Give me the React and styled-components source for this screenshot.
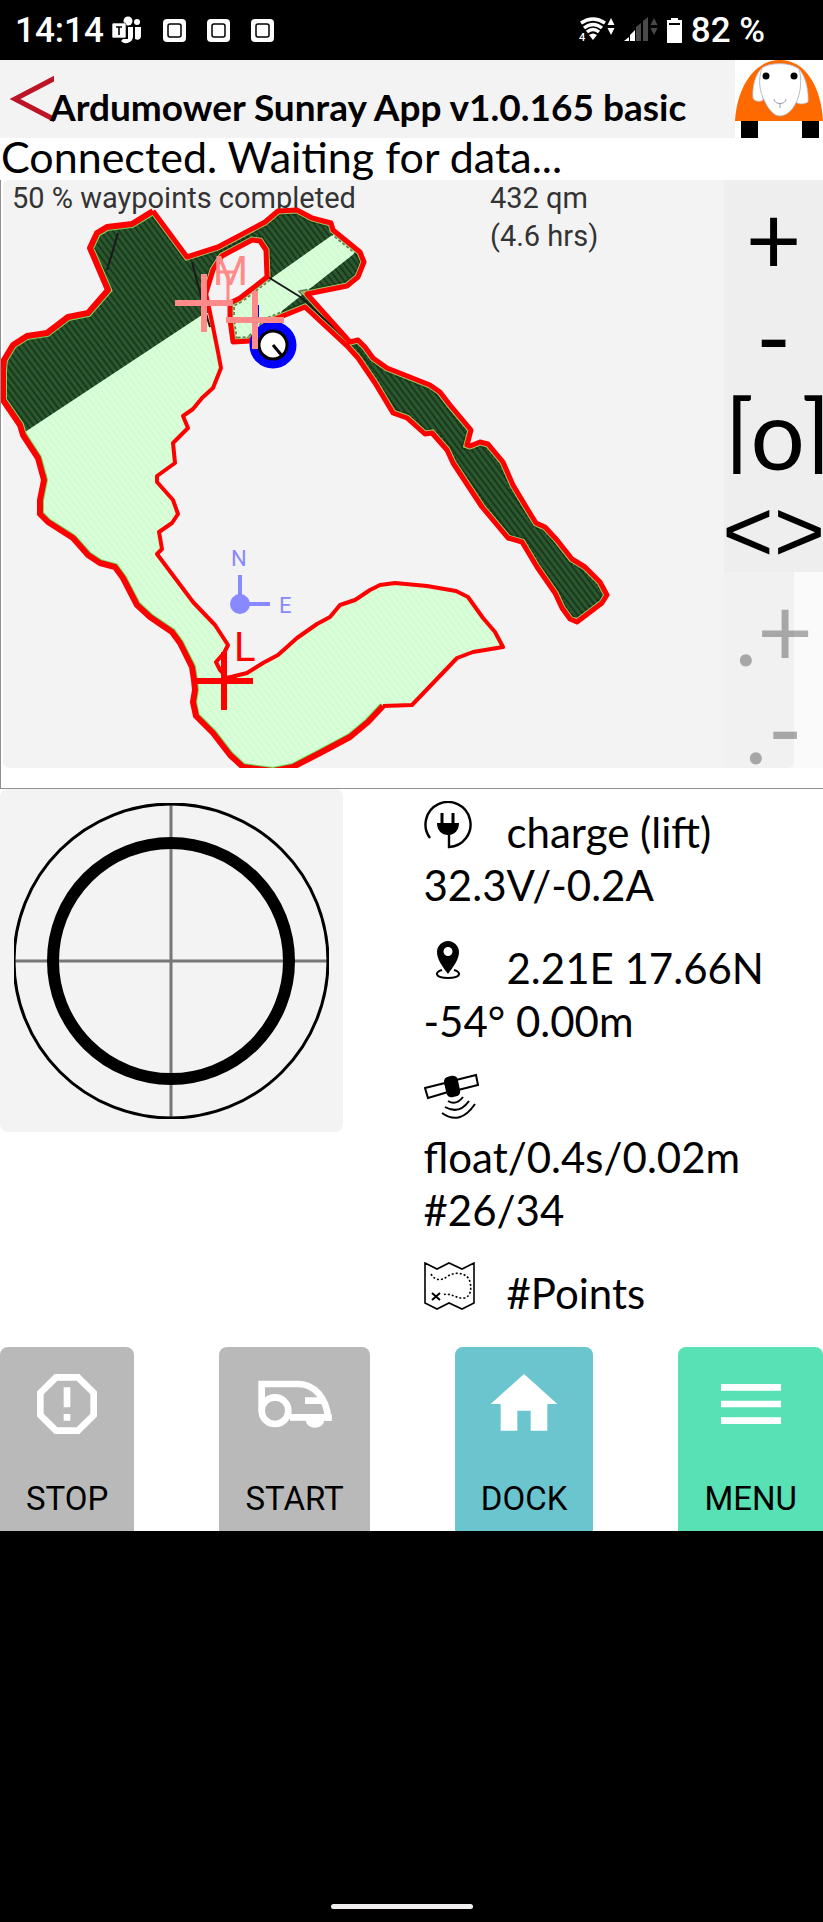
import React from "react";
import styled, { createGlobalStyle } from "styled-components";

const colors = {
  panel: "#f3f3f3",
  tools: "#eeeeee",
  fence: "#ff0000",
  grass: "#d9ffd9",
  mowed: "#2b582f",
  marker: "#ff8a8a",
  compass: "#8888ff",
};

const GlobalStyle = createGlobalStyle`
  * {
    box-sizing: border-box;
  }
  body {
    margin: 0;
    background: #000000;
    font-family: Lato, "Open Sans", sans-serif;
    color: #000000;
  }
  button {
    border: 0;
    padding: 0;
    cursor: pointer;
    color: inherit;
  }
  svg {
    display: block;
  }
`;

const Screen = styled.div`
  min-height: 100vh;
  display: flex;
  flex-direction: column;
`;

// phone status bar
const StatusBar = styled.div`
  height: 60px;
  padding: 0 58px 0 15px;
  display: flex;
  align-items: center;
  justify-content: space-between;
  background: #000000;
  color: #ffffff;
  font-family: Roboto, sans-serif;
  font-size: 35px;
  font-weight: 500;
`;
const StatusGroup = styled.div`
  display: flex;
  align-items: center;
  gap: ${(props) => props.$gap}px;
`;

// app header
const Header = styled.header`
  height: 78px;
  display: flex;
  align-items: stretch;
  background: ${colors.panel};
`;
const BackLink = styled.a`
  width: 50px;
  padding-left: 9px;
  flex-shrink: 0;
`;
const Title = styled.h1`
  flex: 1;
  margin: 0;
  padding-top: 23px;
  font-size: 37px;
  line-height: 48px;
  font-weight: 700;
  white-space: nowrap;
`;
const Message = styled.p`
  margin: 0;
  height: 42px;
  padding-left: 1px;
  font-size: 43px;
  line-height: 37px;
  background: #ffffff;
  white-space: nowrap;
`;

const Content = styled.main`
  background: #ffffff;
`;

// map
const MapSection = styled.section`
  position: relative;
  padding-bottom: 20px;
  border-left: 1px solid #909090;
  border-bottom: 1px solid #909090;
`;
const ToolColumn = styled.div`
  position: absolute;
  top: 0;
  right: 0;
  width: 12%;
`;
const ToolGroup = styled.div`
  height: ${(props) => props.$rows * 98}px;
  padding-top: 8px;
  display: flex;
  flex-direction: column;
  background: ${(props) => (props.$dimmed ? "rgba(238, 238, 238, 0.3)" : colors.tools)};
`;
const ToolButton = styled.button`
  height: 98px;
  flex-shrink: 0;
  background: transparent;
  opacity: ${(props) => (props.$dimmed ? 0.3 : 1)};
  font-family: Lato, sans-serif;
  font-size: 96px;
  line-height: 98px;
  text-align: center;
  white-space: nowrap;
`;
const CenterButton = styled(ToolButton)`
  height: 90px;
  margin-bottom: 8px;
  overflow: hidden;
  text-align: left;
`;
const RotateButton = styled(ToolButton)`
  display: flex;
  justify-content: center;
  font-family: "Liberation Sans", sans-serif;
  font-size: 88px;
`;

// state
const StateSection = styled.section`
  display: grid;
  grid-template-columns: 1fr 1fr;
  padding-bottom: 27px;
`;
const GaugePanel = styled.div`
  width: 343px;
  height: 343px;
  border-radius: 8px;
  background: ${colors.panel};
`;
const InfoList = styled.div`
  display: flex;
  flex-direction: column;
  gap: 30px;
  padding: 17px 0 0 12px;
  font-size: 42px;
  line-height: 53px;
  white-space: nowrap;
`;
const InfoFirst = styled.div`
  display: flex;
  height: 53px;
`;
const IconSlot = styled.span`
  width: 83px;
  flex-shrink: 0;

  svg {
    margin-top: -5px;
  }
`;

// bottom buttons
const ActionBar = styled.nav`
  display: flex;
  justify-content: space-between;
`;
const ActionButton = styled.button`
  height: 184px;
  padding: 17px 26px 0;
  display: flex;
  flex-direction: column;
  align-items: center;
  gap: 35px;
  border-radius: 8px 8px 0 0;
  background: ${(props) => props.$color};
  font-family: Roboto, sans-serif;
  font-size: 33px;
  line-height: 40px;
`;

const NavArea = styled.footer`
  flex: 1;
  display: flex;
  align-items: flex-end;
  justify-content: center;
  padding: 0 20px 13px 0;
`;
const NavHandle = styled.div`
  width: 142px;
  height: 5px;
  border-radius: 3px;
  background: #f0eeee;
`;

const WEST =
  "153,211 132,224 107,227 97,233 90,248 108,290 88,313 68,317 47,333 27,336 13,345 4,360 3,370 3,400 20,425 23,435 38,458 44,480 40,500 40,514 48,522 73,538 88,555 100,563 115,567 123,578 137,605 150,617 172,632 180,643 192,667 194,680 195,690 193,702 196,716 213,733 230,755 243,767 273,771 293,767 320,753 350,737 368,722 383,706";
const SOUTH =
  "383,706 412,705 457,658 473,652 503,647 495,632 483,618 468,597 456,591 427,586 395,583 380,585 370,590 355,600 340,605 330,617 317,624 297,638 278,655 263,663 247,673 227,678 220,670 216,662 224,653 228,645 215,625 193,602 157,554 162,549 159,532 172,523 178,514 173,500 157,482 157,476 175,463 173,443 188,428 183,416 193,409 202,398 213,388 221,368 218,352 213,327 206,293";
const EAST =
  "206,293 213,270 222,256 252,240 260,241 266,250 267,277 240,298 230,303 230,320 233,342 250,341 268,322 305,307 348,347 358,358 375,383 393,413 407,418 425,434 432,433 447,450 453,463 482,507 508,538 522,542 537,567 555,593 562,608 570,619 577,622 602,603 607,595 600,582 585,567 572,559 557,540 545,527 536,523 528,510 513,485 503,462 488,444 480,442 470,446 467,445 471,430 450,405 440,392 430,385 387,368 373,358 365,347 358,340 350,342 307,294 347,286 358,277 364,262 360,252 333,230 331,223 312,218 297,210 278,211 265,222 218,247 187,257 153,211";
const FIELD = `${WEST} ${SOUTH} ${EAST}`;

const Cross = ({ x, y, color }) => (
  <path
    d={`M${x - 29} ${y}h58M${x} ${y - 29}v58`}
    stroke={color}
    strokeWidth="6"
  />
);

const MowerMap = () => (
  <svg viewBox="1 180 822 588" width="100%" fontFamily="Roboto, sans-serif">
    <defs>
      <pattern id="dark" width="5" height="5" patternUnits="userSpaceOnUse" patternTransform="rotate(-37)">
        <rect width="5" height="5" fill={colors.mowed} />
        <path d="M1 0v5" stroke="#0c260f" strokeWidth="1.2" />
      </pattern>
      <pattern id="light" width="5" height="5" patternUnits="userSpaceOnUse" patternTransform="rotate(-37)">
        <rect width="5" height="5" fill={colors.grass} />
        <path d="M1 0v5" stroke="#cdf8cb" strokeWidth="1" />
      </pattern>
      <clipPath id="field">
        <polygon points={FIELD} />
      </clipPath>
    </defs>
    <rect x="3" y="180" width="791" height="588" rx="6" fill={colors.panel} />
    <g fontSize="29" fill="#333333">
      <text x="12" y="208">50 % waypoints completed</text>
      <text x="490" y="208">432 qm</text>
      <text x="490" y="246">(4.6 hrs)</text>
    </g>
    <g clipPath="url(#field)">
      <rect x="0" y="180" width="640" height="600" fill="url(#dark)" />
      <polygon
        points="0,449 28,430 205,313 228,313 225,400 260,560 500,570 530,640 530,780 0,780"
        fill="url(#light)"
      />
      <polygon
        points="338,231 360,249 283,310 268,330 230,345 228,305 273,277"
        fill="url(#light)"
      />
      <polyline points={EAST} fill="none" stroke="#0c2a10" strokeWidth="10" strokeDasharray="3 2" opacity="0.6" />
      <polyline points={EAST} fill="none" stroke="#a8c060" strokeWidth="7" />
      <polyline points={WEST} fill="none" stroke="#6fe060" strokeWidth="8" />
      <path
        d="M118 233L107 270M192 262L202 300L210 327M268 277L302 298M268 277L232 300M302 298L350 343"
        stroke="#1a1a1a"
        strokeWidth="2"
        fill="none"
      />
    </g>
    <g fill="none" stroke={colors.fence} strokeLinejoin="round">
      <polyline points={WEST} strokeWidth="6" />
      <polyline points={SOUTH} strokeWidth="4" />
      <polyline points={EAST} strokeWidth="5" />
    </g>
    <g fill="none" stroke={colors.compass} strokeWidth="4">
      <path d="M240 575v29h30" />
      <circle cx="240" cy="604" r="8" fill={colors.compass} />
    </g>
    <g fontSize="22" fill={colors.compass}>
      <text x="231" y="566">N</text>
      <text x="279" y="613">E</text>
    </g>
    <Cross x={224} y={681} color={colors.fence} />
    <text x="234" y="661" fontSize="40" fill={colors.fence}>L</text>
    <path d="M257 305v16" stroke="#0000ff" strokeWidth="4" />
    <circle cx="273" cy="345" r="19" fill="none" stroke="#0000ff" strokeWidth="9" />
    <circle cx="273" cy="345" r="14" fill="#ffffff" stroke="#000000" strokeWidth="3" />
    <path d="M273 345l10 12" stroke="#000000" strokeWidth="3" />
    <Cross x={204} y={303} color={colors.marker} />
    <Cross x={255} y={320} color={colors.marker} />
    <path d="M219 272h17M228 272v29" stroke={colors.marker} strokeWidth="3" />
    <text x="213" y="285" fontSize="40" fill={colors.marker}>M</text>
  </svg>
);

const Gauge = () => (
  <svg viewBox="0 0 343 343" width="343" height="343" fill="none">
    <path d="M14 172h315M171 14v315" stroke="#777777" strokeWidth="3" />
    <svg x="14" y="14" width="315" height="316" viewBox="14 14 315 316">
      <circle cx="171" cy="172" r="157" stroke="#000000" strokeWidth="3" />
    </svg>
    <circle cx="171" cy="172" r="118" stroke="#000000" strokeWidth="12" />
  </svg>
);

const Sheep = () => (
  <svg viewBox="0 0 88 78" width="88" height="78">
    <rect width="88" height="78" fill="#ffffff" />
    <path d="M0 61C2 26 20 0 45 0s41 26 43 61z" fill="#ff6a00" />
    <path d="M6 61h17v17H6zM67 61h17v17H67z" fill="#000000" />
    <path d="M27 8C20 14 17 28 18 38c1 4 8 4 10 2zM63 8c7 6 11 22 10 34-3 2-9 3-12 0z" fill="#ffffff" stroke="#bbbbcc" strokeWidth="0.8" />
    <path d="M27 8C35 2 55 2 64 9c3 10 2 24-3 34-4 8-10 13-16 13s-11-6-15-14C24 31 23 19 27 8z" fill="#ffffff" stroke="#aaaabb" strokeWidth="0.8" />
    <circle cx="31" cy="16" r="3.5" />
    <circle cx="59" cy="16" r="3.5" />
    <path d="M39 39c0 6 12 6 12 0M45 44v4" fill="none" stroke="#9999aa" />
  </svg>
);

const TeamsIcon = () => (
  <svg viewBox="0 0 30 28" width="30" height="28" fill="#ffffff">
    <circle cx="16" cy="5" r="4.5" />
    <circle cx="25" cy="6" r="3" />
    <path d="M10 11h11v9a7 7 0 0 1-12 5l2-2h5V11z" />
    <path d="M23 11h6v9c0 3-3 5-6 3z" />
    <rect x="0" y="7" width="14" height="15" rx="1.5" stroke="#000000" strokeWidth="0.6" />
    <path d="M4 11h6M7 11v8" stroke="#000000" strokeWidth="1.6" />
  </svg>
);

const SquareIcon = () => (
  <svg viewBox="0 0 23 23" width="23" height="23">
    <rect width="23" height="23" rx="4" fill="#ffffff" />
    <rect x="5" y="5" width="13" height="13" rx="2" fill="#ffffff" stroke="#000000" strokeWidth="1.5" />
  </svg>
);

const WifiIcon = () => (
  <svg viewBox="0 0 36 26" width="36" height="26">
    <g fill="none" stroke="#ffffff" strokeWidth="3.4">
      <path d="M2 6q12-8 24 0" />
      <path d="M5 11q9-7 18 0" />
      <path d="M8 15q6-5 12 0" />
    </g>
    <path d="M10 18q4-3 8 0l-4 5z" fill="#ffffff" />
    <text x="0" y="24" fontSize="11" fontWeight="500" fill="#ffffff">4</text>
    <path d="M32 1l3.5 7h-7zM32 18l3.5-7h-7z" fill="#ffffff" />
  </svg>
);

const SignalIcon = () => (
  <svg viewBox="0 0 34 26" width="34" height="26">
    <path d="M12 10l5-4v18h-5zM19 4l5-4v24h-5z" fill="#4a4a4a" />
    <path d="M0 24l5-4v4zM6 18l5-5v11H6z" fill="#ffffff" />
    <path d="M30 1l3.5 7h-7zM30 18l3.5-7h-7z" fill="#4a4a4a" />
  </svg>
);

const BatteryIcon = () => (
  <svg viewBox="0 0 15 25" width="15" height="25">
    <path d="M4 0h7v2h4v23H0V2h4z" fill="#ffffff" />
    <path d="M2 6h11" stroke="#000000" strokeWidth="2" />
  </svg>
);

const PlugIcon = () => (
  <svg viewBox="0 0 58 53" width="58" height="53" fill="none" stroke="#000000" strokeWidth="2.4">
    <path d="M6 37A22.5 22.5 0 1 1 25 46V32" />
    <path d="M18 12v12M29 12v12" strokeWidth="3" />
    <path d="M13 22h22c0 8-5 12-11 12s-11-4-11-12z" fill="#000000" stroke="none" />
  </svg>
);

const PinIcon = () => (
  <svg viewBox="0 0 58 53" width="58" height="53">
    <path fillRule="evenodd" d="M24 4c-6 0-11 5-11 11 0 7 5 14 11 22 6-8 11-15 11-22 0-6-5-11-11-11zm0 6a4.5 4.5 0 1 1 0 9 4.5 4.5 0 0 1 0-9z" />
    <path d="M18 33c-8 2-7 8 6 8s14-6 6-8" fill="none" stroke="#000000" strokeWidth="2" />
  </svg>
);

const SatelliteIcon = () => (
  <svg viewBox="0 0 58 53" width="58" height="53" fill="none" stroke="#000000" strokeWidth="2">
    <path d="M1 15l20-5 3 9-20 6zM32 7l20-5 2 10-20 5z" />
    <rect x="22" y="4" width="12" height="19" rx="4" transform="rotate(-12 28 13)" fill="#000000" />
    <path d="M24 28q8 5 15-4M21 34q14 8 24-6M18 40q18 13 33-9" />
  </svg>
);

const MapIcon = () => (
  <svg viewBox="0 0 58 53" width="58" height="53" fill="none" stroke="#000000" strokeWidth="1.6">
    <path d="M1 1l12 6 12-6 13 6 12-6v40l-12 6-13-6-12 6-12-6z" />
    <path d="M7 12c4 7 11 7 17 2 8-5 20-3 22 6 2 8 0 15-6 16-8 1-13-6-22-3" strokeDasharray="2 2" />
    <path d="M8 31l8 7M16 31l-8 7" strokeWidth="2" />
  </svg>
);

const ActionIcon = ({ children }) => (
  <svg viewBox="0 0 24 24" width="80" height="80" fill="#ffffff">
    {children}
  </svg>
);

const StopIcon = () => (
  <ActionIcon>
    <path d="M15.73 3H8.27L3 8.27v7.46L8.27 21h7.46L21 15.73V8.27L15.73 3zM19 14.9L14.9 19H9.1L5 14.9V9.1L9.1 5h5.8L19 9.1v5.8z" />
    <path d="M11 7h2v6h-2zM11 15h2v2h-2z" />
  </ActionIcon>
);

const StartIcon = () => (
  <ActionIcon>
    <path d="M2 14V6h11c5 0 8.5 4.5 8.9 10H10.5M15 11h6" fill="none" stroke="#ffffff" strokeWidth="2" />
    <path d="M20.9 17H23v-2h-2z" />
    <circle cx="6" cy="14" r="4" fill="none" stroke="#ffffff" strokeWidth="2" />
    <path d="M15.2 16.8a2.8 2.3 0 0 0 5.6 0z" />
  </ActionIcon>
);

const HomeIcon = () => (
  <ActionIcon>
    <path d="M10 20v-6h4v6h5v-8h3L12 3 2 12h3v8z" />
  </ActionIcon>
);

const MenuIcon = () => (
  <ActionIcon>
    <path d="M3 18h18v-2H3v2zm0-5h18v-2H3v2zm0-7v2h18V6H3z" />
  </ActionIcon>
);

const actions = [
  { label: "STOP", color: "#b9b9b9", Icon: StopIcon },
  { label: "START", color: "#b9b9b9", Icon: StartIcon },
  { label: "DOCK", color: "#6ac5cf", Icon: HomeIcon },
  { label: "MENU", color: "#58e1b5", Icon: MenuIcon },
];

const App = () => {
  return (
    <Screen>
      <GlobalStyle />
      <StatusBar>
        <StatusGroup $gap={21}>
          <StatusGroup $gap={8}>
            <span>14:14</span>
            <TeamsIcon />
          </StatusGroup>
          <SquareIcon />
          <SquareIcon />
          <SquareIcon />
        </StatusGroup>
        <StatusGroup $gap={9}>
          <WifiIcon />
          <SignalIcon />
          <StatusGroup $gap={9}>
            <BatteryIcon />
            <span>82 %</span>
          </StatusGroup>
        </StatusGroup>
      </StatusBar>

      <Content>
        <Header>
          <BackLink href="#" aria-label="Back">
            <svg viewBox="0 0 45 78" width="45" height="78">
              <path d="M50 16L6 39L50 62" fill="none" stroke="#bb1526" strokeWidth="5" />
            </svg>
          </BackLink>
          <Title>Ardumower Sunray App v1.0.165 basic</Title>
          <Sheep />
        </Header>
        <Message>Connected. Waiting for data...</Message>

        <MapSection>
          <MowerMap />
          <ToolColumn>
            <ToolGroup $rows={4}>
              <ToolButton>+</ToolButton>
              <ToolButton>-</ToolButton>
              <CenterButton>[o]</CenterButton>
              <RotateButton>&lt;&gt;</RotateButton>
            </ToolGroup>
            <ToolGroup $rows={2} $dimmed>
              <ToolButton $dimmed>.+</ToolButton>
              <ToolButton $dimmed>.-</ToolButton>
            </ToolGroup>
          </ToolColumn>
        </MapSection>

        <StateSection>
          <GaugePanel>
            <Gauge />
          </GaugePanel>
          <InfoList>
            <div>
              <InfoFirst>
                <IconSlot><PlugIcon /></IconSlot>
                charge (lift)
              </InfoFirst>
              <div>32.3V/-0.2A</div>
            </div>
            <div>
              <InfoFirst>
                <IconSlot><PinIcon /></IconSlot>
                2.21E 17.66N
              </InfoFirst>
              <div>-54° 0.00m</div>
            </div>
            <div>
              <InfoFirst>
                <IconSlot><SatelliteIcon /></IconSlot>
              </InfoFirst>
              <div>float/0.4s/0.02m</div>
              <div>#26/34</div>
            </div>
            <div>
              <InfoFirst>
                <IconSlot><MapIcon /></IconSlot>
                #Points
              </InfoFirst>
            </div>
          </InfoList>
        </StateSection>

        <ActionBar>
          {actions.map(({ label, color, Icon }) => (
            <ActionButton key={label} $color={color}>
              <Icon />
              {label}
            </ActionButton>
          ))}
        </ActionBar>
      </Content>

      <NavArea>
        <NavHandle />
      </NavArea>
    </Screen>
  );
};

export default App;
